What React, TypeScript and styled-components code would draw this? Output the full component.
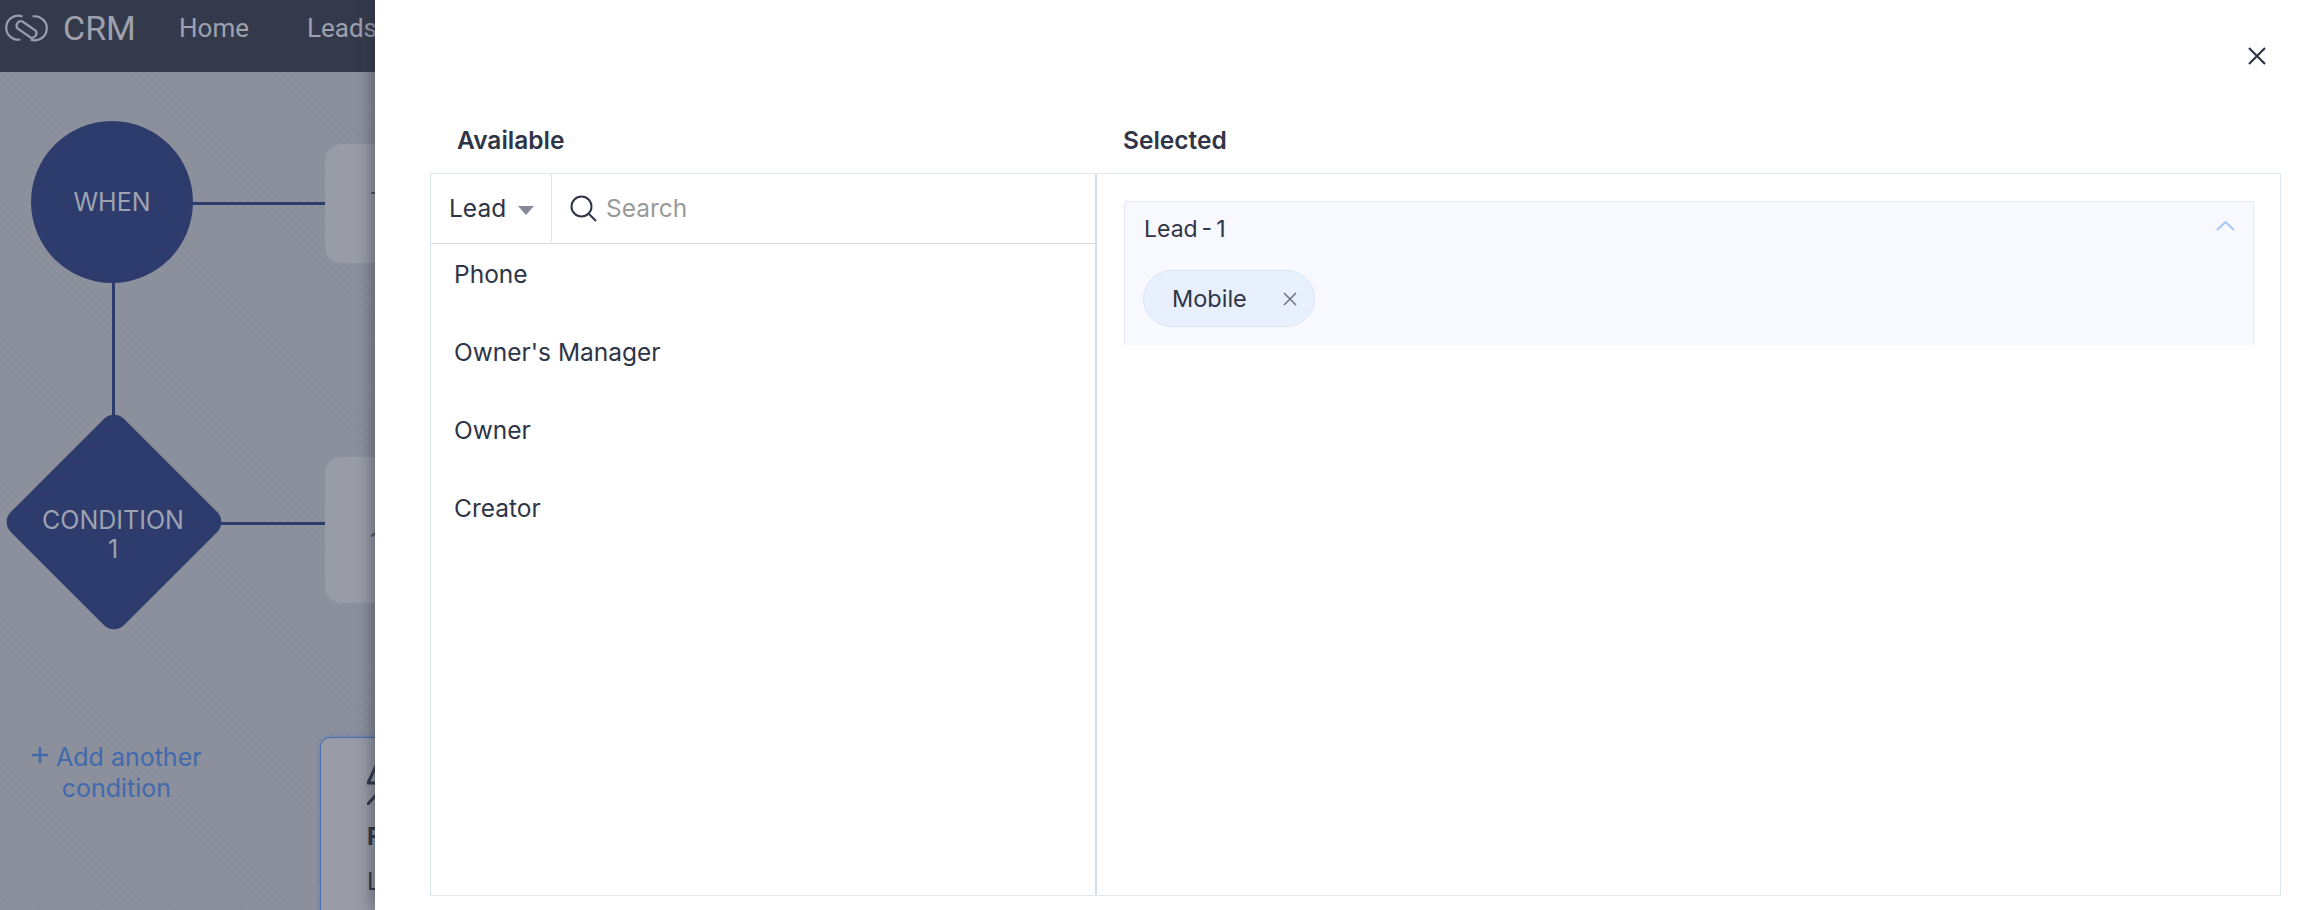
import styled, { createGlobalStyle } from 'styled-components';

const GlobalStyle = createGlobalStyle`
  html, body {
    margin: 0;
    padding: 0;
    background: #8c909c;
  }
  * {
    box-sizing: border-box;
  }
`;

const Page = styled.div`
  position: relative;
  width: 2322px;
  height: 910px;
  overflow: hidden;
  font-family: Inter, 'Liberation Sans', sans-serif;
  color: #2f3546;
`;

const TopBar = styled.div`
  height: 72px;
  background: #343a4c;
  display: flex;
  align-items: flex-start;
  padding: 14px 0 0 5px;
  color: #9ea1ad;
  font-family: Roboto, 'Liberation Sans', sans-serif;
`;

const Brand = styled.div`
  font-size: 34px;
  line-height: 28px;
  margin-left: 15px;
  width: 116px;
`;

const NavLink = styled.div`
  font-size: 26px;
  line-height: 28px;
  width: 128px;
`;

const Canvas = styled.div`
  position: relative;
  height: 838px;
  background-color: #8c909c;
  background-image: repeating-linear-gradient(
    45deg,
    rgba(255, 255, 255, 0.008) 0 3px,
    rgba(0, 0, 0, 0.008) 3px 6px
  );
`;

const WhenNode = styled.div`
  position: absolute;
  left: 31px;
  top: 49px;
  width: 162px;
  height: 162px;
  padding-bottom: 1px;
  border-radius: 50%;
  background: #2d3c6d;
  color: #9ea2b0;
  font-size: 25px;
  display: flex;
  align-items: center;
  justify-content: center;
`;

const Diamond = styled.div`
  position: absolute;
  left: 33.5px;
  top: 369.5px;
  width: 160px;
  height: 160px;
  border-radius: 14px;
  background: #2d3c6d;
  transform: rotate(45deg);
`;

const DiamondLabel = styled.div`
  position: absolute;
  left: 7px;
  top: 434px;
  width: 212px;
  color: #9ea2b0;
  font-size: 25px;
  line-height: 29px;
  text-align: center;
`;

const Wire = styled.div<{ $x: number; $y: number; $w: number; $h: number }>`
  position: absolute;
  left: ${(p) => p.$x}px;
  top: ${(p) => p.$y}px;
  width: ${(p) => p.$w}px;
  height: ${(p) => p.$h}px;
  background: #2d3c6d;
`;

const StepCard = styled.div<{ $y: number; $h: number; $inset: number }>`
  position: absolute;
  left: 325px;
  top: ${(p) => p.$y}px;
  width: 200px;
  height: ${(p) => p.$h}px;
  border-radius: 16px;
  background: #999ca7;
  padding: ${(p) => p.$inset}px 0 0 45px;
  color: #4b4f5e;
  font-size: 25px;
`;

const ActionCard = styled.div`
  position: absolute;
  left: 320px;
  top: 665px;
  width: 200px;
  height: 220px;
  border: 1px solid #4a6fb0;
  border-radius: 10px;
  background: #999ca7;
  box-shadow: 0 0 4px #5a7cb8;
  padding: 27px 0 0 46px;
  color: #2f3546;
`;

const ActionTitle = styled.div`
  font-size: 24px;
  font-weight: 700;
  line-height: 28px;
  margin-top: 14px;
`;

const ActionText = styled.div`
  font-size: 24px;
  line-height: 28px;
  margin-top: 17px;
`;

const AddCondition = styled.div`
  position: absolute;
  left: 31px;
  top: 670px;
  color: #4169ad;
  font-size: 25px;
  line-height: 31px;
  text-align: center;
`;

const PlusIcon = styled.svg`
  margin-right: 7px;
  vertical-align: 2px;
`;

const Drawer = styled.div`
  position: absolute;
  top: 0;
  bottom: 0;
  left: 375px;
  right: 0;
  background: #fff;
  box-shadow: -4px 0 14px rgba(40, 44, 60, 0.45);
  padding: 0 41px 14px 55px;
  display: flex;
  flex-direction: column;
`;

const CloseRow = styled.div`
  height: 125px;
  display: flex;
  justify-content: flex-end;
  padding: 47px 0 0;
  margin-right: 15px;
`;

const Headers = styled.div`
  height: 48px;
  display: grid;
  grid-template-columns: 666px 1fr;
  font-size: 24.5px;
  font-weight: 600;
  line-height: 30px;
`;

const HeaderCell = styled.div`
  padding-left: 27px;
`;

const Panel = styled.div`
  flex: 1;
  display: grid;
  grid-template-columns: 666px 1fr;
  border: 1px solid #e0e6f0;
`;

const AvailableColumn = styled.div`
  border-right: 2px solid #d8dfec;
  display: flex;
  flex-direction: column;
`;

const Toolbar = styled.div`
  height: 70px;
  padding-bottom: 1px;
  display: flex;
  border-bottom: 1px solid #d9dde4;
`;

const ModuleSelect = styled.div`
  width: 121px;
  border-right: 1px solid #dfe5ef;
  display: flex;
  align-items: center;
  gap: 12px;
  padding-left: 18px;
  font-size: 24.5px;
`;

const Caret = styled.span`
  width: 0;
  height: 0;
  border-left: 8.5px solid transparent;
  border-right: 8.5px solid transparent;
  border-top: 9px solid #878a96;
  margin-top: 4px;
`;

const SearchBox = styled.div`
  flex: 1;
  display: flex;
  align-items: center;
  gap: 9px;
  padding-left: 18px;
  font-size: 24.5px;
  color: #9a9a9a;
`;

const OptionList = styled.div`
  display: flex;
  flex-direction: column;
`;

const Option = styled.div`
  height: 78px;
  padding: 15px 0 0 23px;
  font-size: 24.5px;
  line-height: 30px;
`;

const SelectedColumn = styled.div`
  padding: 27px 26px 0 27px;
`;

const Group = styled.div`
  height: 144px;
  background: #f8f9fe;
  border: 1px solid #e3e8f0;
  border-bottom: none;
  border-radius: 3px 3px 0 0;
  padding: 11px 19px 0;
`;

const GroupHead = styled.div`
  display: flex;
  align-items: center;
  justify-content: space-between;
  height: 32px;
  font-size: 23px;
  word-spacing: -2.5px;
`;

const Chevron = styled.svg`
  margin-bottom: 8px;
  margin-right: -1px;
`;

const Chip = styled.div`
  display: inline-flex;
  align-items: center;
  justify-content: space-between;
  width: 172px;
  height: 57px;
  margin-top: 25px;
  margin-left: -1px;
  padding: 0 17px 0 28px;
  border: 1px solid #dbe6f5;
  border-radius: 29px;
  background: #e8f0fd;
  font-size: 23.5px;
`;

function App() {
  return (
    <Page>
      <GlobalStyle />
      <TopBar>
        <svg width="43" height="28" viewBox="0 0 42 28" fill="none" stroke="#9a9dab" strokeWidth="2.2">
          <path d="M17 2.500A12 12 0 1 0 15 25.500" />
          <path d="M25 25.500A12 12 0 1 0 27 2.500" />
          <path d="M17 7.500L30 16.500A4.500 4.500 0 0 1 25 23.500L12 14.500A4.500 4.500 0 0 1 17 7.500Z" />
        </svg>
        <Brand>CRM</Brand>
        <NavLink>Home</NavLink>
        <NavLink>Leads</NavLink>
      </TopBar>
      <Canvas>
        <Wire $x={192} $y={130} $w={134} $h={3} />
        <Wire $x={112} $y={210} $w={3} $h={134} />
        <Wire $x={220} $y={450} $w={105} $h={3} />
        <WhenNode>WHEN</WhenNode>
        <Diamond />
        <DiamondLabel>
          CONDITION
          <br />1
        </DiamondLabel>
        <StepCard $y={72} $h={119} $inset={43}>
          T
        </StepCard>
        <StepCard $y={385} $h={146} $inset={70}>
          1
        </StepCard>
        <AddCondition>
          <PlusIcon width="18" height="18" viewBox="0 0 18 18" stroke="#4169ad" strokeWidth="2.6" fill="none">
            <path d="M9 1V17M1 9H17" />
          </PlusIcon>
          Add another
          <br />
          condition
        </AddCondition>
        <ActionCard>
          <svg width="34" height="40" viewBox="0 0 34 40" fill="none" stroke="#2f3546" strokeWidth="3">
            <path d="M9 1L1 18H14M10 29L0 40" />
          </svg>
          <ActionTitle>F</ActionTitle>
          <ActionText>L</ActionText>
        </ActionCard>
      </Canvas>
      <Drawer>
        <CloseRow>
          <svg width="18" height="18" viewBox="0 0 18 18" stroke="#2f3546" strokeWidth="2.2" fill="none">
            <path d="M1 1L17 17M17 1L1 17" />
          </svg>
        </CloseRow>
        <Headers>
          <HeaderCell>Available</HeaderCell>
          <HeaderCell>Selected</HeaderCell>
        </Headers>
        <Panel>
          <AvailableColumn>
            <Toolbar>
              <ModuleSelect>
                Lead
                <Caret />
              </ModuleSelect>
              <SearchBox>
                <svg width="27" height="27" viewBox="0 0 27 27" fill="none" stroke="#2f3546" strokeWidth="2">
                  <circle cx="11.500" cy="11.500" r="10" />
                  <path d="M19 19L26 26" />
                </svg>
                Search
              </SearchBox>
            </Toolbar>
            <OptionList>
              <Option>Phone</Option>
              <Option>Owner's Manager</Option>
              <Option>Owner</Option>
              <Option>Creator</Option>
            </OptionList>
          </AvailableColumn>
          <SelectedColumn>
            <Group>
              <GroupHead>
                Lead - 1
                <Chevron width="19" height="11" viewBox="0 0 19 11" fill="none" stroke="#a6c6f7" strokeWidth="2">
                  <path d="M1 10L9.500 2L18 10" />
                </Chevron>
              </GroupHead>
              <Chip>
                Mobile
                <svg width="14" height="14" viewBox="0 0 14 14" fill="none" stroke="#6c7280" strokeWidth="1.500">
                  <path d="M1 1L13 13M13 1L1 13" />
                </svg>
              </Chip>
            </Group>
          </SelectedColumn>
        </Panel>
      </Drawer>
    </Page>
  );
}

export default App;
